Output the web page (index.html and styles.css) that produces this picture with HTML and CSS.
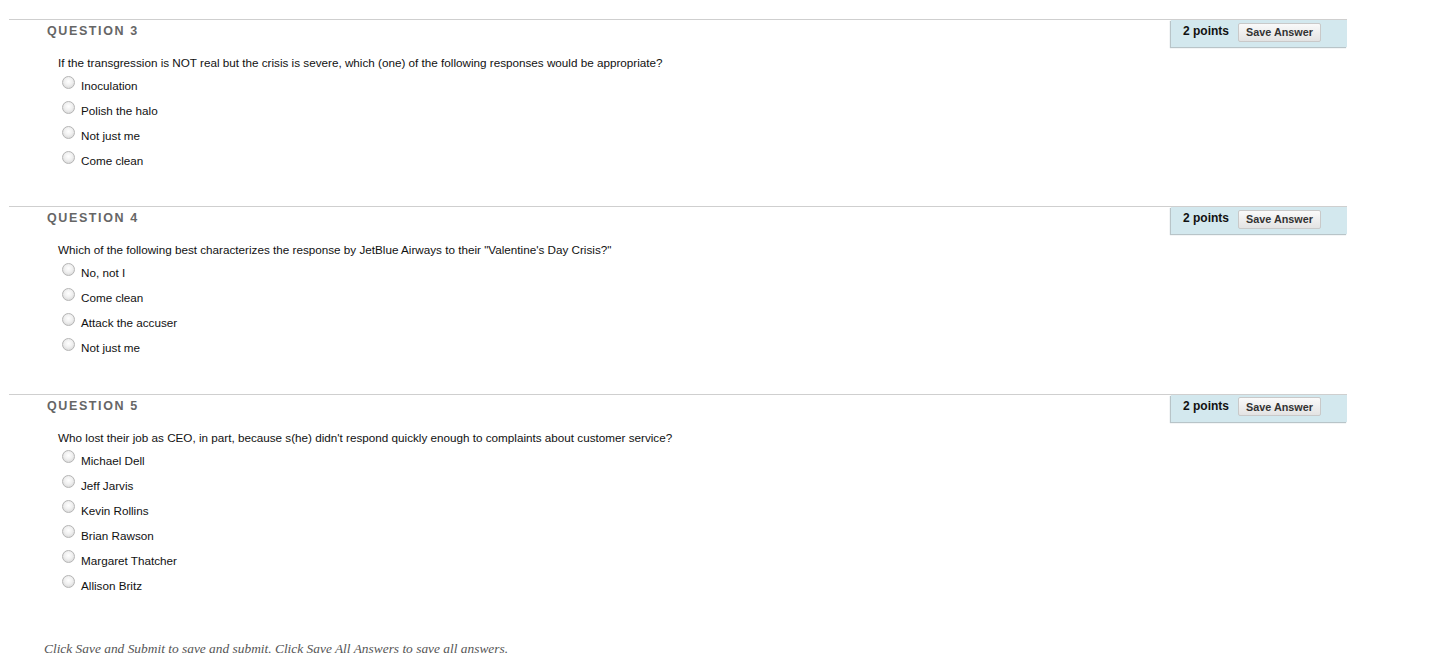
FILE: index.html
```html
<!DOCTYPE html>
<html>
<head>
<meta charset="utf-8">
<link rel="stylesheet" href="styles.css">
</head>
<body>
<div class="page">
  <div class="question">
    <div class="q-head">
      <h3 class="q-title">QUESTION 3</h3>
      <div class="points"><span class="pts">2 points</span><button class="save">Save Answer</button></div>
    </div>
    <div class="q-body">
      <p class="q-text">If the transgression is NOT real but the crisis is severe, which (one) of the following responses would be appropriate?</p>
      <ul class="options">
        <li><span class="radio"></span><span class="label">Inoculation</span></li>
        <li><span class="radio"></span><span class="label">Polish the halo</span></li>
        <li><span class="radio"></span><span class="label">Not just me</span></li>
        <li><span class="radio"></span><span class="label">Come clean</span></li>
      </ul>
    </div>
  </div>
  <div class="question">
    <div class="q-head">
      <h3 class="q-title">QUESTION 4</h3>
      <div class="points"><span class="pts">2 points</span><button class="save">Save Answer</button></div>
    </div>
    <div class="q-body">
      <p class="q-text">Which of the following best characterizes the response by JetBlue Airways to their "Valentine's Day Crisis?"</p>
      <ul class="options">
        <li><span class="radio"></span><span class="label">No, not I</span></li>
        <li><span class="radio"></span><span class="label">Come clean</span></li>
        <li><span class="radio"></span><span class="label">Attack the accuser</span></li>
        <li><span class="radio"></span><span class="label">Not just me</span></li>
      </ul>
    </div>
  </div>
  <div class="question">
    <div class="q-head">
      <h3 class="q-title">QUESTION 5</h3>
      <div class="points"><span class="pts">2 points</span><button class="save">Save Answer</button></div>
    </div>
    <div class="q-body">
      <p class="q-text">Who lost their job as CEO, in part, because s(he) didn't respond quickly enough to complaints about customer service?</p>
      <ul class="options">
        <li><span class="radio"></span><span class="label">Michael Dell</span></li>
        <li><span class="radio"></span><span class="label">Jeff Jarvis</span></li>
        <li><span class="radio"></span><span class="label">Kevin Rollins</span></li>
        <li><span class="radio"></span><span class="label">Brian Rawson</span></li>
        <li><span class="radio"></span><span class="label">Margaret Thatcher</span></li>
        <li><span class="radio"></span><span class="label">Allison Britz</span></li>
      </ul>
    </div>
  </div>
  <p class="footer-note">Click Save and Submit to save and submit. Click Save All Answers to save all answers.</p>
</div>
</body>
</html>
```
FILE: styles.css
```css
html, body {
  margin: 0;
  padding: 0;
  background: #fff;
}
body {
  font-family: "Liberation Sans", Arial, sans-serif;
  font-size: 11.7px;
  color: #111;
}
.page {
  padding-top: 19px;
}
.question {
  margin-left: 9px;
  width: 1338px;
  border-top: 1px solid #cfcfcf;
  padding-bottom: 33.3px;
}
.q-head {
  display: flex;
  justify-content: space-between;
  height: 28px;
}
.q-title {
  margin: 0;
  padding: 4px 0 0 38px;
  font-size: 12.5px;
  line-height: 14px;
  font-weight: bold;
  letter-spacing: 1.6px;
  color: #666;
}
.points {
  width: 176px;
  height: 27px;
  background: #d3e8ee;
  box-shadow: -1px 1px 1px #b8c4c8;
  display: flex;
  align-items: center;
  padding: 0 0 3px 12px;
  box-sizing: border-box;
  gap: 9px;
}
.pts {
  font-weight: bold;
  font-size: 12px;
  color: #111;
  margin-bottom: 2px;
}
.save {
  font-family: "Liberation Sans", Arial, sans-serif;
  font-weight: bold;
  font-size: 10.8px;
  color: #333;
  height: 19px;
  width: 83px;
  padding: 0;
  border: 1px solid #c9c9c9;
  border-radius: 2px;
  background: linear-gradient(#fafafa, #e3e3e3);
}
.q-body {
  padding-left: 49px;
  padding-top: 8px;
}
.q-text {
  margin: 0;
  line-height: 14px;
  color: #111;
}
.options {
  list-style: none;
  margin: 3px 0 0 0;
  padding: 0;
}
.options li {
  height: 25px;
  display: flex;
  align-items: center;
}
.radio {
  width: 11px;
  height: 11px;
  border-radius: 50%;
  border: 1px solid #b5b5b5;
  background: radial-gradient(circle at 50% 40%, #ffffff 0%, #f0f0f0 45%, #cfcfcf 100%);
  margin-left: 4px;
  margin-right: 6px;
  margin-bottom: 7px;
  box-sizing: content-box;
  flex: none;
}
.label {
  color: #111;
}
.footer-note {
  margin: 10px 0 0 44px;
  font-family: "Liberation Serif", Georgia, serif;
  font-style: italic;
  font-size: 13.4px;
  line-height: 15px;
  color: #555;
}
```
